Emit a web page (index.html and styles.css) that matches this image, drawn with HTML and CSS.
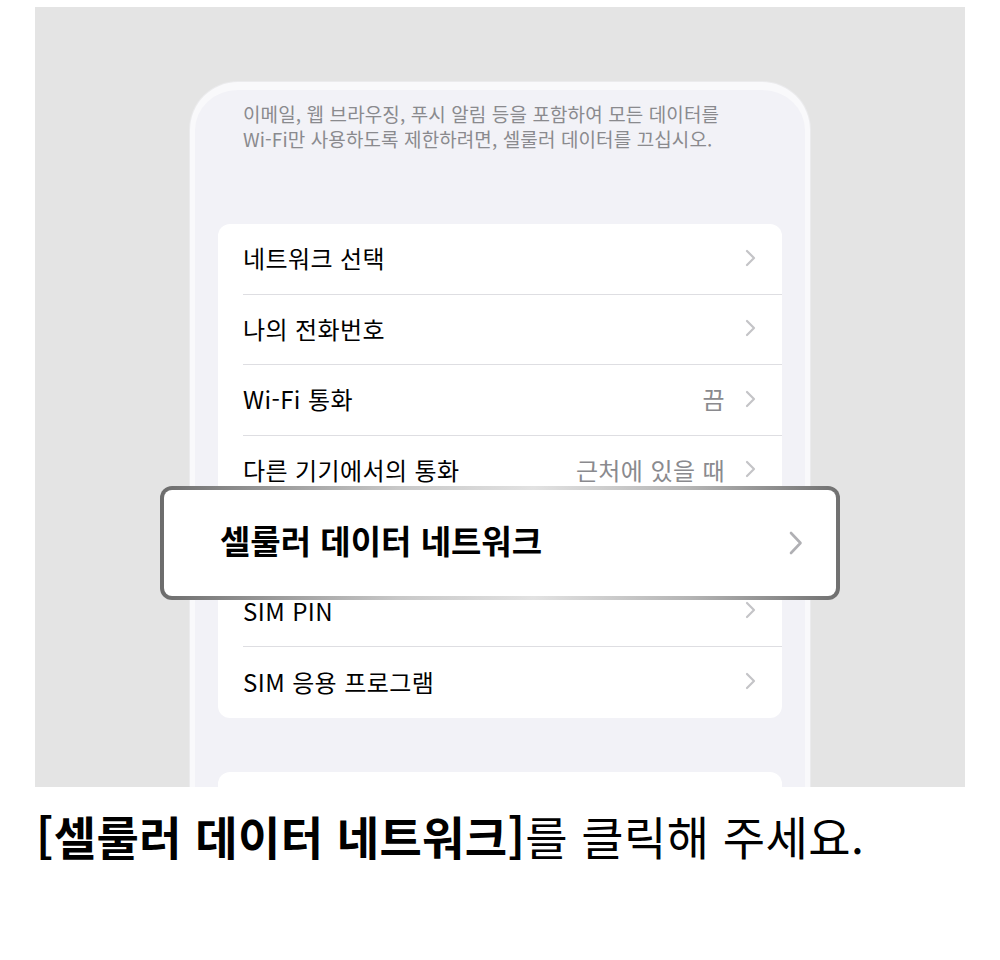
FILE: index.html
```html
<!DOCTYPE html>
<html lang="ko">
<head>
  <meta charset="UTF-8" />
  <meta name="viewport" content="width=device-width, initial-scale=1" />
  <title>셀룰러 설정 안내</title>
  <link rel="stylesheet" href="styles.css">
</head>
<body>
  <div class="stage">
    <div class="phone">
      <div class="screen">
        <p class="footnote">이메일, 웹 브라우징, 푸시 알림 등을 포함하여 모든 데이터를<br>Wi-Fi만 사용하도록 제한하려면, 셀룰러 데이터를 끄십시오.</p>

        <ul class="group">
          <li class="row">
            <div class="row-body">
              <span class="label">네트워크 선택</span>
              <svg class="chev" viewBox="0 0 11 18"><polyline points="2,2 9,9 2,16" /></svg>
            </div>
          </li>
          <li class="row">
            <div class="row-body">
              <span class="label">나의 전화번호</span>
              <svg class="chev" viewBox="0 0 11 18"><polyline points="2,2 9,9 2,16" /></svg>
            </div>
          </li>
          <li class="row">
            <div class="row-body">
              <span class="label">Wi-Fi 통화</span>
              <span class="value">끔</span>
              <svg class="chev" viewBox="0 0 11 18"><polyline points="2,2 9,9 2,16" /></svg>
            </div>
          </li>
          <li class="row">
            <div class="row-body">
              <span class="label">다른 기기에서의 통화</span>
              <span class="value">근처에 있을 때</span>
              <svg class="chev" viewBox="0 0 11 18"><polyline points="2,2 9,9 2,16" /></svg>
            </div>
          </li>
          <li class="row">
            <div class="row-body">
              <span class="label">셀룰러 데이터 네트워크</span>
              <svg class="chev" viewBox="0 0 11 18"><polyline points="2,2 9,9 2,16" /></svg>
            </div>
          </li>
          <li class="row">
            <div class="row-body">
              <span class="label">SIM PIN</span>
              <svg class="chev" viewBox="0 0 11 18"><polyline points="2,2 9,9 2,16" /></svg>
            </div>
          </li>
          <li class="row">
            <div class="row-body">
              <span class="label">SIM 응용 프로그램</span>
              <svg class="chev" viewBox="0 0 11 18"><polyline points="2,2 9,9 2,16" /></svg>
            </div>
          </li>
        </ul>

        <!-- next settings group, only its top edge shows -->
        <div class="group group-next"></div>
      </div>
    </div>

    <!-- enlarged copy of the row to tap -->
    <div class="callout">
      <div class="callout-inner">
        <span class="label">셀룰러 데이터 네트워크</span>
        <svg class="chev chev-big" viewBox="0 0 14 24"><polyline points="2,2 11.5,12 2,22" /></svg>
      </div>
    </div>
  </div>

  <p class="caption"><strong>[셀룰러 데이터 네트워크]</strong>를 클릭해 주세요.</p>
</body>
</html>
```

FILE: styles.css
```css
body {
  margin: 0;
  font-family: "Noto Sans CJK KR", "Noto Sans", sans-serif;
  background-color: #ffffff;
  color: #000000;
}

.stage {
  position: relative;
  height: 780px;
  margin: 7px 35px 0;
  padding-top: 75px;
  box-sizing: border-box;
  background-color: #e4e4e4;
  overflow: hidden;
}

.phone {
  width: 620px;
  margin: 0 auto;
  box-sizing: border-box;
  border: 5px solid #f9f9fb;
  border-top-width: 8px;
  border-bottom: none;
  border-radius: 48px 48px 0 0;
  background-color: #f2f2f7;
  box-shadow: 0 0 0 1px #ebebed;
}

.screen {
  min-height: 800px;
  padding: 11px 23px 0;
}

.footnote {
  margin: 0 0 73px;
  padding: 0 25px;
  font-size: 19px;
  line-height: 25px;
  letter-spacing: 0.1px;
  color: #8a8a8e;
}

.group {
  list-style: none;
  margin: 0 0 54px;
  padding: 0;
  background-color: #ffffff;
  border-radius: 12px;
}

.group-next {
  height: 140px;
}

.row {
  padding-left: 25px;
}

.row-body {
  display: flex;
  align-items: center;
  height: 70.5px;
  box-sizing: border-box;
  padding-right: 26px;
  padding-bottom: 2px;
  border-bottom: 1px solid #dedee2;
  font-size: 24px;
  letter-spacing: 0.4px;
}

.row:last-child .row-body {
  border-bottom: none;
}

.label {
  flex: 1;
}

.value {
  margin-right: 20px;
  color: #8a8a8e;
}

.chev {
  width: 11px;
  height: 18px;
  fill: none;
  stroke: #c4c4c7;
  stroke-width: 2.2;
  stroke-linecap: round;
  stroke-linejoin: round;
}

/* magnified row laid over the list */
.callout {
  position: absolute;
  left: 125px;
  top: 479px;
  width: 680px;
  height: 114px;
  padding: 4px;
  box-sizing: border-box;
  border-radius: 12px;
  background: linear-gradient(90deg, #6c6c6c 0%, #8e8e8e 12%, #c8c8c8 35%, #e2e2e2 55%, #b4b4b4 78%, #707070 100%);
}

.callout-inner {
  display: flex;
  align-items: center;
  height: 100%;
  box-sizing: border-box;
  padding: 0 33px 6px 56px;
  border-radius: 8px;
  background-color: #ffffff;
  font-size: 33px;
  font-weight: 700;
}

.chev-big {
  width: 14px;
  height: 24px;
  margin-top: 6px;
  stroke: #b0b0b4;
  stroke-width: 2.6;
}

.caption {
  margin: 22px 0 0 36px;
  font-size: 46px;
  line-height: 53px;
  letter-spacing: 0.4px;
  font-weight: 400;
}

.caption strong {
  font-weight: 700;
}
```
